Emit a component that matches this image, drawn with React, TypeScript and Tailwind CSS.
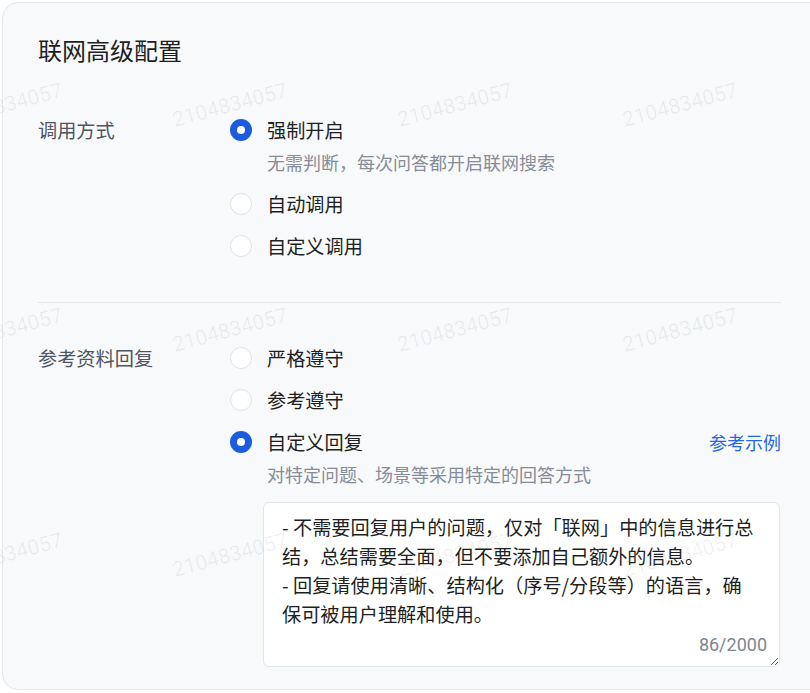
import React from 'react';

const WM_ROWS = [105, 330, 555];
const WM_COLS = [5, 230, 455, 680, 905];

function Radio({ checked }: { checked?: boolean }) {
    if (checked) {
        return (
            <span className="flex h-[22px] w-[22px] shrink-0 items-center justify-center rounded-full bg-[#1a5cdb]">
                <span className="h-2 w-2 rounded-full bg-white" />
            </span>
        );
    }
    return <span className="h-[22px] w-[22px] shrink-0 rounded-full border border-[#dfe2e8] bg-white" />;
}

function Option({ label, desc, checked, extra }: { label: string; desc?: string; checked?: boolean; extra?: React.ReactNode }) {
    return (
        <div className="flex flex-col">
            <div className="flex h-7 items-center">
                <Radio checked={checked} />
                <span className="ml-[15px] text-[19.2px] leading-7 text-[#1d1f23]">{label}</span>
                {extra && <div className="ml-auto">{extra}</div>}
            </div>
            {desc && <div className="mt-1 pl-[37px] text-[18px] leading-7 text-[#878c97]">{desc}</div>}
        </div>
    );
}

function Watermark() {
    return (
        <div className="pointer-events-none absolute inset-0 overflow-hidden select-none">
            {WM_ROWS.map((y) =>
                WM_COLS.map((x) => (
                    <div
                        key={`${x}-${y}`}
                        className="absolute w-[140px] -rotate-[15deg] text-center font-['Roboto','Noto_Sans',sans-serif] text-[21px] leading-6 text-black/[0.06]"
                        style={{ left: x - 70, top: y - 12 }}
                    >
                        2104834057
                    </div>
                )),
            )}
        </div>
    );
}

const PROMPT =
    '- 不需要回复用户的问题，仅对「联网」中的信息进行总\n结，总结需要全面，但不要添加自己额外的信息。\n- 回复请使用清晰、结构化（序号/分段等）的语言，确\n保可被用户理解和使用。';

export default function App() {
    return (
        <div className="relative h-[693px] w-[810px] overflow-hidden bg-white font-['Noto_Sans_CJK_SC','Noto_Sans',sans-serif]">
            <div className="ml-[2px] mt-[2px] flex h-[688px] w-[850px] flex-col rounded-2xl border border-[#e6e8ec] bg-[#f8f9fb] pl-[35px] pt-[31px]">
                <div className="text-[24px] leading-8 text-[#1d1f23]">联网高级配置</div>

                <div className="mt-[50px] flex w-[743px]">
                    <div className="w-[192px] text-[19.2px] leading-7 text-[#50555f]">调用方式</div>
                    <div className="flex flex-1 flex-col gap-[14px]">
                        <Option label="强制开启" desc="无需判断，每次问答都开启联网搜索" checked />
                        <Option label="自动调用" />
                        <Option label="自定义调用" />
                    </div>
                </div>

                <div className="mt-[42px] h-px w-[743px] bg-[#e6e8ec]" />

                <div className="mt-[41px] flex w-[743px]">
                    <div className="w-[192px] text-[19.2px] leading-7 text-[#50555f]">参考资料回复</div>
                    <div className="flex flex-1 flex-col gap-[14px]">
                        <Option label="严格遵守" />
                        <Option label="参考遵守" />
                        <Option
                            label="自定义回复"
                            desc="对特定问题、场景等采用特定的回答方式"
                            checked
                            extra={<span className="cursor-pointer text-[18px] leading-7 text-[#2468e8]">参考示例</span>}
                        />
                        <div className="relative ml-[33px]">
                            <textarea
                                readOnly
                                value={PROMPT}
                                className="block h-[165px] w-[517px] resize-y rounded-md border border-[#e2e5ea] bg-white pl-[18px] pr-[10px] pt-[10px] text-[19.2px] leading-[29px] text-[#1d1f23] outline-none"
                            />
                            <span className="pointer-events-none absolute bottom-[10px] right-[14px] font-['Roboto','Noto_Sans',sans-serif] text-[18px] leading-6 text-[#80858f]">
                                86/2000
                            </span>
                        </div>
                    </div>
                </div>
            </div>
            <Watermark />
        </div>
    );
}
